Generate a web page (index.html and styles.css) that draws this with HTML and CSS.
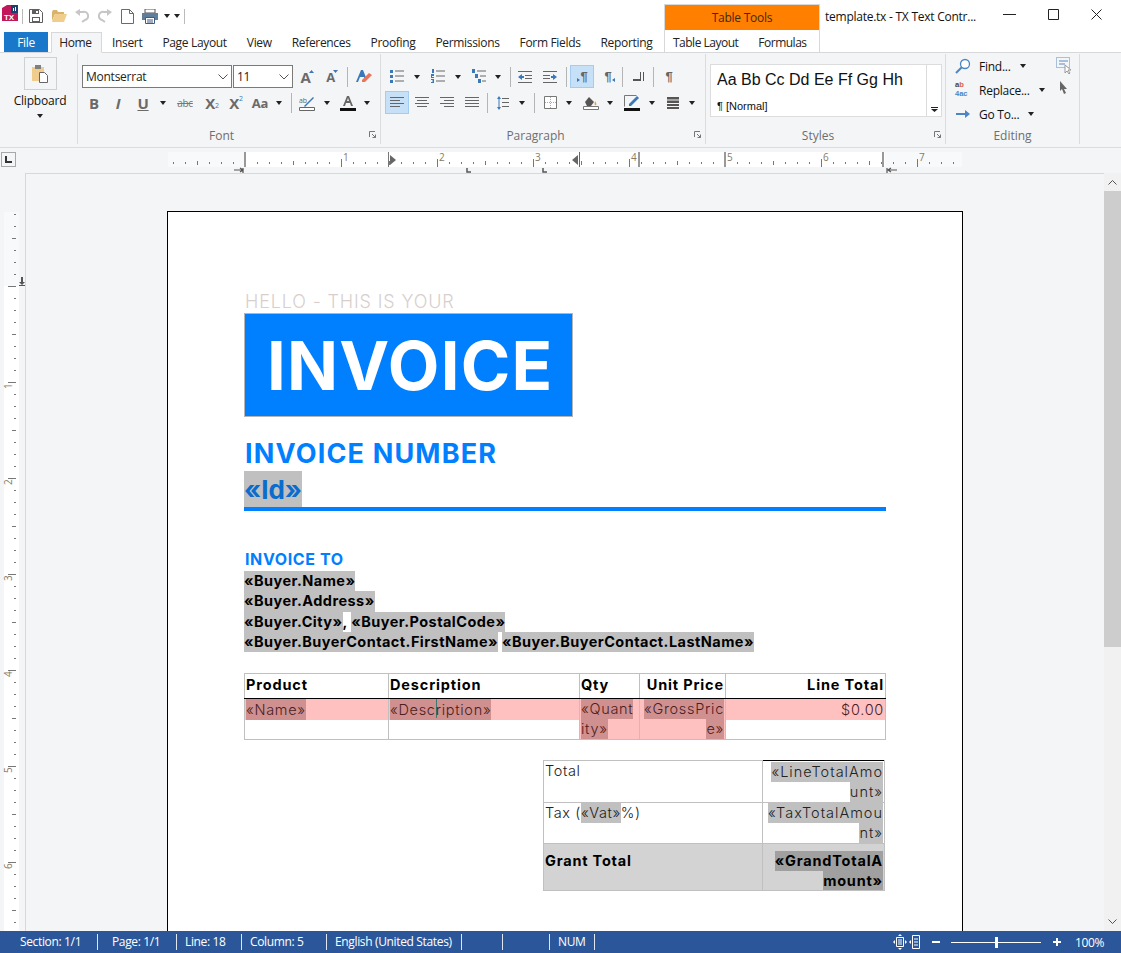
FILE: index.html
```html
<!DOCTYPE html>
<html lang="en">
<head>
    <meta charset="UTF-8">
    <title>template.tx - TX Text Control</title>
    <link rel="stylesheet" href="styles.css">
</head>
<body>
    <div class="header">
        <div class="header-left">
            <div class="qat">
                <svg class="logo" width="16" height="18" viewBox="0 0 16 18"><path d="M0 3l5-3h11v16H0z" fill="#c2185b"/><rect x="9" y="0" width="7" height="8" fill="#1f3f6e"/><path d="M11 6V3h1v3zM13 6V2h1v4z" fill="#fff"/><text x="2" y="15" class="logo-text">TX</text></svg>
                <span class="qat-sep"></span>
                <svg width="14" height="14" viewBox="0 0 14 14" class="qat-save"><path d="M.5.5h10l3 3v10H.5z" fill="none" stroke="#5f5f5f"/><path d="M3 1h7v4H3zM3 8h8v5H3z" fill="#5f5f5f"/><path d="M7 2h2v2H7zM4 9h6v3H4z" fill="#fff"/></svg>
                <svg width="15" height="12" viewBox="0 0 15 12" class="qat-open"><path d="M0 2l1-2h4l1 2h6v2H3L0 11z" fill="#d9b36c"/><path d="M3 4h12l-3 8H0z" fill="#f0cd8c"/></svg>
                <svg width="14" height="14" viewBox="0 0 14 14" class="qat-undo"><path d="M3 3h5a4 4 0 0 1 2 8l-3 2" fill="none" stroke="#c6c6c6" stroke-width="2"/><path d="M0 3l5-3v7z" fill="#c6c6c6"/></svg>
                <svg width="14" height="14" viewBox="0 0 14 14" class="qat-redo"><path d="M11 3H6a4 4 0 0 0-2 8l3 2" fill="none" stroke="#c6c6c6" stroke-width="2"/><path d="M14 3L9 0v7z" fill="#c6c6c6"/></svg>
                <svg width="13" height="15" viewBox="0 0 13 15" class="qat-new"><path d="M.5.5h8l4 4v10H.5zM8.500.5v4h4" fill="#fff" stroke="#6a6a6a"/></svg>
                <svg width="16" height="15" viewBox="0 0 16 15" class="qat-print"><path d="M3 0h10v4H3z" fill="#fff" stroke="#555"/><path d="M0 4h16v7H0z" fill="#5f7d9c"/><path d="M3.500 8.500h9v6h-9z" fill="#fff" stroke="#3c5c80"/><path d="M5 11h6M5 13h6" stroke="#3c5c80"/></svg>
                <span class="caret qat-caret"></span>
                <span class="caret qat-caret2"></span>
                <span class="qat-sep qat-sep-end"></span>
            </div>
            <div class="tabs">
                <span class="tab-file">File</span>
                <span class="tab tab-active">Home</span>
                <span class="tab">Insert</span>
                <span class="tab">Page Layout</span>
                <span class="tab">View</span>
                <span class="tab">References</span>
                <span class="tab">Proofing</span>
                <span class="tab">Permissions</span>
                <span class="tab">Form Fields</span>
                <span class="tab">Reporting</span>
            </div>
        </div>
        <div class="context">
            <div class="context-title">Table Tools</div>
            <div class="context-tabs">
                <span class="tab">Table Layout</span>
                <span class="tab">Formulas</span>
            </div>
        </div>
        <div class="title">template.tx - TX Text Contr...</div>
        <div class="window-btns">
            <svg width="13" height="11" viewBox="0 0 13 11"><path d="M0 5.500h13" stroke="#222"/></svg>
            <svg width="11" height="11" viewBox="0 0 11 11"><path d="M.5.5h10v10H.5z" fill="none" stroke="#222"/></svg>
            <svg width="11" height="11" viewBox="0 0 11 11"><path d="M.5.5l10 10M10.500.5l-10 10" stroke="#222"/></svg>
        </div>
    </div>

    <div class="ribbon">
        <div class="group group-clipboard">
            <span class="big-btn">
                <svg width="16" height="19" viewBox="0 0 16 19"><path d="M0 3h12v14H0z" fill="#f0cd8c"/><path d="M3 1h6v4H3z" fill="#7f7f7f"/><path d="M7.500 8.500h5l3 3v7h-8z" fill="#fff" stroke="#666"/></svg>
            </span>
            <span class="big-label">Clipboard</span>
            <span class="caret"></span>
        </div>

        <div class="group group-font">
            <div class="rows">
                <div class="row">
                    <div class="combo combo-font">Montserrat<svg width="10" height="6" viewBox="0 0 10 6"><path d="M.5.500l4.500 4.500L9.500.5" fill="none" stroke="#555"/></svg></div>
                    <div class="combo combo-size">11<svg width="10" height="6" viewBox="0 0 10 6"><path d="M.5.500l4.500 4.500L9.500.5" fill="none" stroke="#555"/></svg></div>
                    <span class="tool w28 t-grow"><b class="glyph">A</b><svg width="5" height="3" viewBox="0 0 5 3"><path d="M0 3l2.500-3L5 3z" fill="#3c78b8"/></svg></span>
                    <span class="tool w22 t-shrink"><b class="glyph glyph-small">A</b><svg width="5" height="3" viewBox="0 0 5 3"><path d="M0 0l2.500 3L5 0z" fill="#3c78b8"/></svg></span>
                    <span class="sep ml4 mr4"></span>
                    <span class="tool w24">
                        <svg width="16" height="15" viewBox="0 0 16 15"><path d="M0 13L5 1h2l4 10H9L8 8H4l-2 5z" fill="#3c78b8"/><path d="M6 11l7-7 3 2-7 7H6z" fill="#e8765a"/></svg>
                    </span>
                </div>
                <div class="row">
                    <span class="tool w24"><b class="glyph">B</b></span>
                    <span class="tool w24"><i class="glyph glyph-i">I</i></span>
                    <span class="tool w26"><b class="glyph glyph-u">U</b></span>
                    <span class="tool w14"><span class="caret"></span></span>
                    <span class="tool w30"><span class="glyph-abc">abc</span></span>
                    <span class="tool w24"><b class="glyph">X</b><sub class="sub">2</sub></span>
                    <span class="tool w24"><b class="glyph">X</b><sup class="sup">2</sup></span>
                    <span class="tool w24"><b class="glyph glyph-aa">Aa</b></span>
                    <span class="tool w14"><span class="caret"></span></span>
                    <span class="sep ml5 mr5"></span>
                    <span class="tool w20">
                        <svg width="16" height="16" viewBox="0 0 16 16"><path d="M.5 12.500h15v3H.5z" fill="#fff" stroke="#666"/><path d="M5 11l9-9 1 1-9 9z" fill="#3c78b8"/><text x="0" y="8" class="mini-text">ab</text></svg>
                    </span>
                    <span class="tool w19"><span class="caret"></span></span>
                    <span class="tool w24">
                        <svg width="16" height="16" viewBox="0 0 16 16"><path d="M3 11L7 1h2l4 10h-2L10 8H6l-1 3zM7 6h2L8 3z" fill="#666"/><path d="M0 13h16v3H0z" fill="#111"/></svg>
                    </span>
                    <span class="tool w14"><span class="caret"></span></span>
                </div>
            </div>
            <div class="group-label">Font</div>
            <svg class="launcher" width="7" height="7" viewBox="0 0 7 7"><path d="M.5 6V.5H6M3 3l3.500 3.500M6.500 3.500v3h-3" fill="none" stroke="#777"/></svg>
        </div>

        <div class="group group-paragraph">
            <div class="rows">
                <div class="row">
                    <span class="tool w24">
                        <svg width="14" height="15" viewBox="0 0 14 15"><path d="M5 2h9M5 7h9M5 12h9" stroke="#666"/><path d="M0 1h3v3H0zM0 6h3v3H0zM0 11h3v3H0z" fill="#3c78b8"/></svg>
                    </span>
                    <span class="tool w16"><span class="caret"></span></span>
                    <span class="tool w26">
                        <svg width="14" height="15" viewBox="0 0 14 15"><path d="M5 2h9M5 7h9M5 12h9" stroke="#666"/><path d="M1 0h2v4H1zM0 5h3v2H1v1h2v1H0zM0 10h3v4H0v-1h2v-.5H1v-1h1V11H0z" fill="#3c78b8"/></svg>
                    </span>
                    <span class="tool w14"><span class="caret"></span></span>
                    <span class="tool w28">
                        <svg width="14" height="15" viewBox="0 0 14 15"><path d="M5 2h9M8 7h6M10 12h4" stroke="#666"/><path d="M0 0h3v4H0zM3 5h3v4H3zM6 10h3v4H6z" fill="#3c78b8"/></svg>
                    </span>
                    <span class="tool w10"><span class="caret"></span></span>
                    <span class="sep ml7 mr1"></span>
                    <span class="tool w25">
                        <svg width="14" height="12" viewBox="0 0 14 12"><path d="M0 .5h14M7 4.500h7M7 7.500h7M0 11.500h14" stroke="#666"/><path d="M0 6l4-3v2h2v2H4v2z" fill="#3c78b8"/></svg>
                    </span>
                    <span class="tool w25">
                        <svg width="14" height="12" viewBox="0 0 14 12"><path d="M0 .5h14M0 4.500h7M0 7.500h7M0 11.500h14" stroke="#666"/><path d="M14 6l-4-3v2H8v2h2v2z" fill="#3c78b8"/></svg>
                    </span>
                    <span class="sep ml4 mr3"></span>
                    <span class="tool w24 tool-on"><span class="mini-tri-right"></span><span class="pilcrow">¶</span></span>
                    <span class="tool w24 ml4"><span class="pilcrow">¶</span><span class="mini-tri"></span></span>
                    <span class="sep"></span>
                    <span class="tool w30">
                        <svg width="11" height="9" viewBox="0 0 11 9"><path d="M0 7h7V0h1v9H0zM10 0h1v9h-1z" fill="#555"/></svg>
                    </span>
                    <span class="sep"></span>
                    <span class="tool w30"><span class="pilcrow">¶</span></span>
                </div>
                <div class="row">
                    <span class="tool w24 tool-on">
                        <svg width="14" height="12" viewBox="0 0 14 12"><path d="M0 .5h14M0 3.500h10M0 6.500h14M0 9.500h10" stroke="#666"/></svg>
                    </span>
                    <span class="tool w25">
                        <svg width="14" height="12" viewBox="0 0 14 12"><path d="M0 .5h14M2 3.500h10M0 6.500h14M2 9.500h10" stroke="#666"/></svg>
                    </span>
                    <span class="tool w25">
                        <svg width="14" height="12" viewBox="0 0 14 12"><path d="M0 .5h14M4 3.500h10M0 6.500h14M4 9.500h10" stroke="#666"/></svg>
                    </span>
                    <span class="tool w25">
                        <svg width="14" height="12" viewBox="0 0 14 12"><path d="M0 .5h14M0 3.500h14M0 6.500h14M0 9.500h14" stroke="#666"/></svg>
                    </span>
                    <span class="sep ml3"></span>
                    <span class="tool w30">
                        <svg width="12" height="14" viewBox="0 0 12 14"><path d="M5 2.500h7M5 6.500h7M5 10.500h7" stroke="#666"/><path d="M2 0l2 3H0zM2 14l2-3H0zM1.500 3h1v8h-1z" fill="#3c78b8"/></svg>
                    </span>
                    <span class="tool w8"><span class="caret"></span></span>
                    <span class="sep ml8"></span>
                    <span class="tool w30">
                        <svg width="13" height="13" viewBox="0 0 13 13"><path d="M.5.500h12v12H.5z" fill="#fff" stroke="#777"/><path d="M6.500 1v11M1 6.500h11" stroke="#aaa" stroke-dasharray="1 1"/></svg>
                    </span>
                    <span class="tool w8"><span class="caret"></span></span>
                    <span class="tool w26 ml5">
                        <svg width="16" height="15" viewBox="0 0 16 15"><path d="M2 7l4-5 5 5-3 4H4z" fill="#555"/><path d="M12 6c1 2 2 3 1 4s-2 0-1-4z" fill="#e0a030"/><path d="M.5 11.500h15v3H.5z" fill="#fff" stroke="#777"/></svg>
                    </span>
                    <span class="tool w12"><span class="caret"></span></span>
                    <span class="tool w32">
                        <svg width="17" height="16" viewBox="0 0 17 16"><path d="M.5.500h12M.5.5v11" stroke="#777" fill="none"/><path d="M5 9l8-8 2 2-8 8H5z" fill="#3c78b8"/><path d="M0 13h16v3H0z" fill="#111"/></svg>
                    </span>
                    <span class="tool w8"><span class="caret"></span></span>
                    <span class="tool w26 ml4">
                        <svg width="12" height="12" viewBox="0 0 12 12"><path d="M0 0h12v2.500H0zM0 3.500h12V6H0zM0 7h12v2H0zM0 10h12v2H0z" fill="#555"/></svg>
                    </span>
                    <span class="tool w12"><span class="caret"></span></span>
                </div>
            </div>
            <div class="group-label">Paragraph</div>
            <svg class="launcher" width="7" height="7" viewBox="0 0 7 7"><path d="M.5 6V.5H6M3 3l3.500 3.500M6.500 3.500v3h-3" fill="none" stroke="#777"/></svg>
        </div>

        <div class="group group-styles">
            <div class="styles-box">
                <div class="styles-list">
                    <div class="style-sample">Aa Bb Cc Dd Ee Ff Gg Hh</div>
                    <div class="style-name">¶ [Normal]</div>
                </div>
                <div class="styles-more">
                    <svg width="7" height="5" viewBox="0 0 7 5"><path d="M0 0h7v1H0zM0 2h7L3.500 5z" fill="#222"/></svg>
                </div>
            </div>
            <div class="group-label">Styles</div>
            <svg class="launcher" width="7" height="7" viewBox="0 0 7 7"><path d="M.5 6V.5H6M3 3l3.500 3.500M6.500 3.500v3h-3" fill="none" stroke="#777"/></svg>
        </div>

        <div class="group group-editing">
            <div class="edit-grid">
                <div class="edit-item">
                    <svg width="16" height="16" viewBox="0 0 16 16"><circle cx="10" cy="6" r="4.500" fill="#fff" stroke="#4a86c5" stroke-width="1.300"/><path d="M7 9l-6 6" stroke="#4a86c5" stroke-width="2"/></svg>
                    <span>Find...</span><span class="caret"></span>
                </div>
                <svg class="edit-side" width="15" height="17" viewBox="0 0 15 17"><path d="M.5.500h13v10H.5z" fill="none" stroke="#5a8ac0" stroke-dasharray="1 1"/><path d="M3 4h9M3 7h6" stroke="#5a8ac0"/><path d="M9 8v8l2-2 2 3 1-1-2-3h3z" fill="#fff" stroke="#999"/></svg>
                <div class="edit-item">
                    <span class="abac"><b class="abac-top">a<em>b</em></b><b class="abac-bottom">4ac</b></span>
                    <span>Replace...</span><span class="caret"></span>
                </div>
                <svg class="edit-side" width="9" height="13" viewBox="0 0 9 13"><path d="M1 0v10l2-2 2 5 2-1-2-4h3z" fill="#666"/></svg>
                <div class="edit-item">
                    <svg width="16" height="16" viewBox="0 0 16 16"><path d="M1 7h10v2H1z" fill="#4a86c5"/><path d="M10 4l5 4-5 4z" fill="#4a86c5"/></svg>
                    <span>Go To...</span><span class="caret"></span>
                </div>
            </div>
            <div class="group-label">Editing</div>
        </div>
    </div>

    <div class="ruler-row">
        <span class="ruler-btn"><svg width="7" height="7" viewBox="0 0 7 7"><path d="M0 0h2v5h5v2H0z" fill="#333"/></svg></span>
        <svg class="ruler" width="800" height="22" viewBox="0 0 800 22">
            <defs>
                <pattern id="hticks" x="77" y="0" width="96" height="22" patternUnits="userSpaceOnUse">
                    <rect x="0" y="7" width="1" height="8" fill="#777"/>
                    <rect x="12" y="10" width="1" height="2" fill="#777"/>
                    <rect x="24" y="10" width="1" height="2" fill="#777"/>
                    <rect x="36" y="10" width="1" height="2" fill="#777"/>
                    <rect x="48" y="9" width="1" height="4" fill="#777"/>
                    <rect x="60" y="10" width="1" height="2" fill="#777"/>
                    <rect x="72" y="10" width="1" height="2" fill="#777"/>
                    <rect x="84" y="10" width="1" height="2" fill="#777"/>
                </pattern>
            </defs>
            <rect x="0" y="0" width="794" height="15" fill="#f8f9fa"/>
            <rect x="77" y="0" width="640" height="15" fill="#fff"/>
            <rect x="0" y="0" width="794" height="15" fill="url(#hticks)"/>
            <text class="ruler-num" x="175" y="9">1</text>
            <text class="ruler-num" x="271" y="9">2</text>
            <text class="ruler-num" x="367" y="9">3</text>
            <text class="ruler-num" x="463" y="9">4</text>
            <text class="ruler-num" x="559" y="9">5</text>
            <text class="ruler-num" x="655" y="9">6</text>
            <text class="ruler-num" x="751" y="9">7</text>
            <path d="M76 0h2v15h-2zM470 0h2v15h-2zM556 0h2v15h-2zM714 0h2v15h-2z" fill="#999"/>
            <path d="M220 0h1v15h-1z" fill="#777"/>
            <path d="M222 3l6 5-6 5z" fill="#666"/>
            <path d="M411 0h1v15h-1zM410 3l-6 5 6 5z" fill="#666"/>
            <path d="M66 18h9M75 16v5M72 16l3 2-3 2" fill="none" stroke="#555" stroke-width="1.200"/>
            <path d="M299 16v4h4M375 16v4h4" fill="none" stroke="#555" stroke-width="1.500"/>
            <path d="M719 16v5M720 18h9M723 16l-3 2 3 2" fill="none" stroke="#555" stroke-width="1.200"/>
        </svg>
    </div>

    <div class="main">
        <div class="vruler">
            <svg width="25" height="730" viewBox="0 0 25 730">
                <defs>
                    <pattern id="vticks" x="0" y="74" width="25" height="96" patternUnits="userSpaceOnUse">
                        <rect x="8" y="0" width="8" height="1" fill="#777"/>
                        <rect x="14" y="12" width="2" height="1" fill="#777"/>
                        <rect x="14" y="24" width="2" height="1" fill="#777"/>
                        <rect x="14" y="36" width="2" height="1" fill="#777"/>
                        <rect x="12" y="48" width="4" height="1" fill="#777"/>
                        <rect x="14" y="60" width="2" height="1" fill="#777"/>
                        <rect x="14" y="72" width="2" height="1" fill="#777"/>
                        <rect x="14" y="84" width="2" height="1" fill="#777"/>
                    </pattern>
                </defs>
                <rect x="4" y="0" width="15" height="74" fill="#f8f9fa"/>
                <rect x="4" y="74" width="15" height="656" fill="#fff"/>
                <rect x="4" y="0" width="15" height="730" fill="url(#vticks)"/>
                <text class="ruler-num" transform="translate(12 177) rotate(-90)">1</text>
                <text class="ruler-num" transform="translate(12 273) rotate(-90)">2</text>
                <text class="ruler-num" transform="translate(12 369) rotate(-90)">3</text>
                <text class="ruler-num" transform="translate(12 465) rotate(-90)">4</text>
                <text class="ruler-num" transform="translate(12 561) rotate(-90)">5</text>
                <text class="ruler-num" transform="translate(12 657) rotate(-90)">6</text>
                <path d="M21 65h2v7h-2zM19 70h6l-3 3zM19 73h6v1h-6z" fill="#555"/>
            </svg>
        </div>
        <div class="canvas">
            <div class="page">
                <div class="hello">HELLO - THIS IS YOUR</div>
                <div class="invoice-box">INVOICE</div>
                <div class="number-title">INVOICE NUMBER</div>
                <div class="number-line"><span class="field">«Id»</span></div>
                <div class="to-title">INVOICE TO</div>
                <div class="buyer"><span class="field">«Buyer.Name»</span></div>
                <div class="buyer"><span class="field">«Buyer.Address»</span></div>
                <div class="buyer"><span class="field">«Buyer.City»</span>, <span class="field">«Buyer.PostalCode»</span></div>
                <div class="buyer"><span class="field">«Buyer.BuyerContact.FirstName»</span> <span class="field">«Buyer.BuyerContact.LastName»</span></div>

                <table class="items">
                    <tr class="items-head">
                        <th class="c-product">Product</th>
                        <th class="c-desc">Description</th>
                        <th class="c-qty">Qty</th>
                        <th class="c-price">Unit Price</th>
                        <th class="c-line">Line Total</th>
                    </tr>
                    <tr class="items-row">
                        <td><div class="pink"><span class="pink-field">«Name»</span></div></td>
                        <td><div class="pink"><span class="pink-field">«Desc<span class="cursor"></span>ription»</span></div></td>
                        <td class="all-pink"><span class="pink-field">«Quant</span><br><span class="pink-field">ity»</span></td>
                        <td class="all-pink num"><span class="pink-field">«GrossPric</span><br><span class="pink-field">e»</span></td>
                        <td class="num"><div class="pink">$0.00</div></td>
                    </tr>
                </table>

                <table class="totals">
                    <tr class="t-first">
                        <td class="t-label">Total</td>
                        <td class="t-value t-top"><span class="field">«LineTotalAmo</span><br><span class="field">unt»</span></td>
                    </tr>
                    <tr class="t-second">
                        <td class="t-label">Tax (<span class="field">«Vat»</span>%)</td>
                        <td class="t-value"><span class="field">«TaxTotalAmou</span><br><span class="field">nt»</span></td>
                    </tr>
                    <tr class="t-grand">
                        <td class="t-label">Grant Total</td>
                        <td class="t-value"><span class="field-dark">«GrandTotalA</span><br><span class="field-dark">mount»</span></td>
                    </tr>
                </table>
            </div>
        </div>
        <div class="scrollbar">
            <svg width="9" height="5" viewBox="0 0 9 5"><path d="M.5 4.500l4-4 4 4" fill="none" stroke="#555"/></svg>
            <div class="thumb"></div>
            <svg class="scroll-down" width="9" height="5" viewBox="0 0 9 5"><path d="M.5.500l4 4 4-4" fill="none" stroke="#555"/></svg>
        </div>
    </div>

    <div class="status">
        <span class="st st-section">Section: 1/1</span>
        <span class="st st-page">Page: 1/1</span>
        <span class="st st-line">Line: 18</span>
        <span class="st st-col">Column: 5</span>
        <span class="st st-lang">English (United States)</span>
        <span class="st st-empty"></span>
        <span class="st st-empty2"></span>
        <span class="st st-num">NUM</span>
        <div class="zoom">
            <svg width="14" height="16" viewBox="0 0 14 16"><path d="M7 0l2 2H5zM7 16l2-2H5zM0 8l2-2v4zM14 8l-2-2v4z" fill="#fff"/><path d="M3.500 3.500h7v9h-7zM5 6h4M5 8h4M5 10h4" fill="none" stroke="#fff"/></svg>
            <svg width="11" height="14" viewBox="0 0 11 14"><path d="M3.500.5h7v13h-7zM5 4h4M5 7h4M5 10h4" fill="none" stroke="#fff"/><path d="M0 7l2-2v4z" fill="#fff"/></svg>
            <span class="zoom-minus"></span>
            <span class="zoom-track"><span class="zoom-thumb"></span></span>
            <span class="zoom-plus"></span>
            <span class="zoom-val">100%</span>
        </div>
    </div>
</body>
</html>
```
FILE: styles.css
```css
* {
    margin: 0;
    padding: 0;
    box-sizing: border-box;
}
body {
    width: 1121px;
    height: 953px;
    overflow: hidden;
    display: flex;
    flex-direction: column;
    background: #fff;
    color: #111;
    font-family: "Open Sans", sans-serif;
    font-size: 12px;
    letter-spacing: -0.25px;
}

/* title + tabs */
.header {
    display: flex;
    height: 53px;
    border-bottom: 1px solid #d6d8da;
    flex: none;
}
.header-left {
    width: 664px;
    flex: none;
    display: flex;
    flex-direction: column;
}
.qat {
    height: 32px;
    display: flex;
    align-items: center;
    padding-left: 2px;
}
.logo {
    margin-top: -4px;
}
.logo-text {
    font: bold 8px "Liberation Sans", sans-serif;
    fill: #fff;
}
.qat-sep {
    width: 1px;
    height: 15px;
    background: #bbb;
    margin: 0 6px 0 4px;
}
.qat-open { margin-left: 9px; }
.qat-undo { margin-left: 8px; }
.qat-redo { margin-left: 9px; }
.qat-new { margin-left: 9px; }
.qat-print { margin-left: 8px; }
.qat-caret { margin-left: 6px; }
.qat-caret2 { margin-left: 4px; }
.qat-sep-end { margin: 0 0 0 4px; }
.caret {
    display: inline-block;
    width: 0;
    height: 0;
    border-left: 3.5px solid transparent;
    border-right: 3.5px solid transparent;
    border-top: 4px solid #222;
}
.tabs {
    display: flex;
    height: 20px;
    padding-left: 4px;
    align-items: stretch;
    letter-spacing: -0.33px;
}
.tab-file {
    width: 44px;
    flex: none;
    margin-right: 3px;
    background: #1a78ca;
    color: #fff;
    display: flex;
    align-items: center;
    justify-content: center;
}
.tab {
    flex: none;
    padding: 0 10px;
    display: flex;
    align-items: center;
    white-space: nowrap;
    color: #222;
}
.tab-active {
    width: 51px;
    padding: 0 2px 0 0;
    justify-content: center;
    background: #f4f5f7;
    border: 1px solid #d6d8da;
    border-bottom: 1px solid #f4f5f7;
    height: 21px;
}
.context {
    width: 156px;
    flex: none;
    margin-top: 4px;
    border: 1px solid #d6d8da;
    border-bottom: 0;
    display: flex;
    flex-direction: column;
}
.context-title {
    height: 25px;
    background: #ff7f00;
    text-align: center;
    line-height: 25px;
    color: #3f2a0c;
    flex: none;
}
.context-tabs {
    display: flex;
    flex: 1;
    padding-top: 3px;
    letter-spacing: -0.5px;
}
.context-tabs .tab {
    padding: 0 10px 0 8px;
}
.context-tabs .tab + .tab {
    padding-left: 10px;
}
.title {
    width: 178px;
    flex: none;
    padding: 8px 0 0 5px;
    white-space: nowrap;
}
.window-btns {
    display: flex;
    align-items: flex-start;
    gap: 32px;
    padding: 9px 0 0 5px;
    flex: 1;
}

/* ribbon */
.ribbon {
    display: flex;
    height: 95px;
    background: #f4f5f7;
    border-bottom: 1px solid #dbdcde;
    padding-top: 1px;
    flex: none;
}
.group {
    position: relative;
    border-right: 1px solid #dbdcde;
    height: 90px;
    padding-top: 11px;
    flex: none;
}
.group-clipboard {
    width: 78px;
    display: flex;
    flex-direction: column;
    align-items: center;
    padding: 3px 0 0 3px;
}
.big-btn {
    width: 33px;
    height: 33px;
    border: 1px solid #d0d0d0;
    display: flex;
    align-items: center;
    justify-content: center;
}
.big-label {
    margin-top: 2px;
    line-height: 17px;
    letter-spacing: -0.2px;
}
.group-clipboard .caret {
    margin-top: 5px;
}
.group-font {
    width: 303px;
    padding-left: 4px;
}
.group-paragraph {
    width: 325px;
    padding-left: 4px;
}
.group-styles {
    width: 240px;
    padding-top: 10px;
}
.group-editing {
    width: 134px;
    padding-top: 0;
}
.rows {
    display: flex;
    flex-direction: column;
    gap: 3px;
}
.row {
    display: flex;
    height: 23px;
    align-items: center;
}
.group-label {
    position: absolute;
    left: 0;
    right: 15px;
    bottom: 0;
    text-align: center;
    color: #6e6e6e;
    letter-spacing: 0;
}
.group-editing .group-label {
    right: 0;
}
.launcher {
    position: absolute;
    right: 4px;
    bottom: 6px;
}
.combo {
    height: 23px;
    flex: none;
    border: 1px solid #7a7a7a;
    background: #fff;
    display: flex;
    align-items: center;
    justify-content: space-between;
    padding: 0 3px;
    color: #222;
}
.combo-font {
    width: 150px;
}
.combo-size {
    width: 60px;
    margin-left: 1px;
}
.tool {
    position: relative;
    height: 23px;
    display: flex;
    align-items: center;
    justify-content: center;
    flex: none;
}
.w8 { width: 8px; }
.w10 { width: 10px; }
.w12 { width: 12px; }
.w14 { width: 14px; }
.w16 { width: 16px; }
.w19 { width: 19px; }
.w20 { width: 20px; }
.w22 { width: 22px; }
.w24 { width: 24px; }
.w25 { width: 25px; }
.w26 { width: 26px; }
.w28 { width: 28px; }
.w30 { width: 30px; }
.w32 { width: 32px; }
.ml3 { margin-left: 3px; }
.ml4 { margin-left: 4px; }
.ml5 { margin-left: 5px; }
.ml7 { margin-left: 7px; }
.ml8 { margin-left: 8px; }
.mr1 { margin-right: 1px; }
.mr3 { margin-right: 3px; }
.mr4 { margin-right: 4px; }
.mr5 { margin-right: 5px; }
.tool-on {
    background: #c5e0f7;
    border: 1px solid #a3cdf0;
}
.glyph {
    font: bold 15px "Open Sans", sans-serif;
    color: #6a6a6a;
}
.glyph-small {
    font-size: 13px;
}
.glyph-i {
    font-weight: bold;
    font-style: italic;
}
.glyph-u {
    text-decoration: underline;
}
.glyph-aa {
    font-size: 13px;
}
.glyph-abc {
    font-size: 10px;
    color: #777;
    text-decoration: line-through;
}
.sub, .sup {
    font-size: 7px;
    color: #3c78b8;
    line-height: 1;
    align-self: flex-end;
    margin-bottom: 5px;
}
.sup {
    align-self: flex-start;
    margin: 4px 0 0;
}
.t-grow svg, .t-shrink svg {
    margin: 0 0 10px -2px;
}
.mini-text {
    font: 7px "Open Sans", sans-serif;
    fill: #666;
}
.pilcrow {
    font: bold 13px "Liberation Sans", sans-serif;
    color: #666;
}
.mini-tri, .mini-tri-right {
    width: 0;
    height: 0;
    border-top: 2.500px solid transparent;
    border-bottom: 2.500px solid transparent;
    border-right: 3px solid #3c78b8;
    margin: 7px 0 0 1px;
}
.mini-tri-right {
    border-right: 0;
    border-left: 3px solid #3c78b8;
    margin: 7px 1px 0 0;
}
.sep {
    width: 1px;
    height: 20px;
    background: #b5b5b5;
    flex: none;
}

/* styles gallery */
.styles-box {
    margin: 0 0 0 4px;
    width: 232px;
    height: 53px;
    border: 1px solid #dcdcdc;
    background: #fff;
    display: flex;
}
.styles-list {
    flex: 1;
    padding: 4px 0 0 6px;
}
.style-sample {
    font: 16px "Liberation Sans", sans-serif;
    line-height: 22px;
    letter-spacing: 0;
    color: #111;
}
.style-name {
    font: 11px "Liberation Sans", sans-serif;
    line-height: 12px;
    margin-top: 9px;
    letter-spacing: 0;
}
.styles-more {
    width: 15px;
    border-left: 1px solid #dcdcdc;
    display: flex;
    align-items: flex-end;
    justify-content: center;
    padding-bottom: 4px;
}

/* editing */
.edit-grid {
    display: grid;
    grid-template-columns: 96px 24px;
    padding: 0 0 0 9px;
}
.edit-item {
    height: 24px;
    display: flex;
    align-items: center;
    white-space: nowrap;
}
.edit-item > svg, .abac {
    width: 16px;
    margin-right: 8px;
    flex: none;
}
.edit-item .caret {
    margin-left: 9px;
}
.edit-side {
    margin: 3px 0 0 0;
    justify-self: center;
}
.abac {
    display: flex;
    flex-direction: column;
    font: bold 7.500px/8.700px "Liberation Sans", sans-serif;
    letter-spacing: 0;
}
.abac b {
    color: #444;
}
.abac em {
    font-style: normal;
    color: #d9603b;
}
.abac .abac-bottom {
    color: #4a86c5;
}

/* rulers */
.ruler-row {
    height: 25px;
    flex: none;
    background: #f4f5f7;
    display: flex;
    padding: 4px 0 0 1px;
}
.ruler-btn {
    width: 15px;
    height: 15px;
    border: 1px solid #a8a8a8;
    display: flex;
    align-items: center;
    justify-content: center;
}
.ruler {
    margin-left: 152px;
    flex: none;
    overflow: visible;
}
.ruler-num {
    font: 10px "Open Sans", sans-serif;
    fill: #8a7a60;
}
.main {
    flex: 1;
    min-height: 0;
    display: flex;
    overflow: hidden;
    background: #f4f5f7;
}
.vruler {
    width: 25px;
    flex: none;
    padding-top: 39px;
}
.canvas {
    width: 1079px;
    flex: none;
    border-left: 1px solid #d6d8da;
    border-top: 1px solid #d6d8da;
    padding: 37px 0 0 141px;
    overflow: hidden;
}
.scrollbar {
    flex: 1;
    background: #f1f1f1;
    display: flex;
    flex-direction: column;
    align-items: center;
    padding-top: 7px;
}
.thumb {
    width: 100%;
    height: 456px;
    margin-top: 6px;
    background: #cdcdcd;
    flex: none;
}
.scroll-down {
    margin-top: auto;
    margin-bottom: 7px;
}

/* the document */
.page {
    width: 796px;
    height: 900px;
    background: #fff;
    border: 1px solid #000;
    padding: 79px 76px 0;
    font-family: "Inter", sans-serif;
    color: #111;
    letter-spacing: 0;
}
.hello {
    height: 22px;
    line-height: 22px;
    font-size: 18px;
    font-weight: 300;
    color: #d8cfcd;
    letter-spacing: 0.85px;
    padding-left: 1px;
}
.invoice-box {
    width: 329px;
    height: 104px;
    background: #0080ff;
    border: 1px solid #b5b5b5;
    color: #fff;
    font-size: 67px;
    font-weight: 700;
    line-height: 104px;
    padding-left: 22px;
    letter-spacing: 1.2px;
}
.number-title {
    margin-top: 18px;
    height: 36px;
    line-height: 38px;
    font-size: 27px;
    font-weight: 700;
    color: #0080ff;
    padding-left: 1px;
    letter-spacing: 1.16px;
}
.number-line {
    height: 40px;
    border-bottom: 4px solid #0080ff;
    line-height: 34px;
    font-size: 26px;
    font-weight: 700;
    color: #0a6ccc;
}
.number-line .field {
    padding-top: 2px;
}
.field {
    background: #c0c0c0;
    display: inline-block;
}
.to-title {
    margin-top: 39px;
    height: 21px;
    line-height: 19px;
    font-size: 16px;
    font-weight: 700;
    color: #0080ff;
    padding-left: 1px;
    letter-spacing: 0.6px;
}
.buyer {
    line-height: 20.330px;
    font-size: 14.500px;
    font-weight: 700;
    color: #000;
    letter-spacing: 0.45px;
}
.items, .totals {
    border-collapse: collapse;
    table-layout: fixed;
    font-size: 14.500px;
}
.items {
    width: 641px;
    margin-top: 21px;
}
.items th, .items td, .totals td {
    border: 1px solid #c0c0c0;
    vertical-align: top;
}
.items th {
    height: 25px;
    line-height: 21px;
    padding: 0 1px;
    text-align: left;
    font-weight: 700;
    color: #000;
    border-bottom: 1px solid #000;
    letter-spacing: 0.85px;
}
.c-product { width: 144px; }
.c-desc { width: 191px; }
.c-qty { width: 60px; }
.items .c-price { width: 86px; text-align: right; }
.items .c-line { width: 160px; text-align: right; }
.items td {
    line-height: 20px;
    height: 41px;
    color: #4a2020;
    font-weight: 300;
    letter-spacing: 0.7px;
}
.pink {
    background: #ffc0c0;
    height: 21px;
    line-height: 21px;
    padding: 0 1px;
}
.pink-field {
    background: #d09090;
    display: inline-block;
}
.cursor {
    display: inline-block;
    width: 1px;
    height: 19px;
    margin-right: -1px;
    background: #3c7a70;
    vertical-align: top;
}
.items .all-pink {
    background: #ffc0c0;
    padding: 0 1px;
}
.items .num {
    text-align: right;
}
.totals {
    width: 341px;
    margin: 20px 0 0 299px;
    font-weight: 300;
    color: #222;
}
.totals td {
    line-height: 20px;
    padding: 0 1px;
}
.t-first td {
    height: 42px;
}
.t-second td {
    height: 41px;
}
.t-label {
    width: 219px;
    letter-spacing: 0.6px;
}
.t-value {
    width: 122px;
    text-align: right;
    letter-spacing: 1px;
}
.totals .t-first .t-value {
    padding-top: 1px;
}
.totals .t-top {
    border-top: 1px solid #000;
}
.totals .t-grand td {
    height: 46px;
    line-height: 19.500px;
    background: #d3d3d3;
    font-weight: 700;
    color: #000;
    border-top: 1px solid #000;
    padding-top: 7px;
    letter-spacing: 0.8px;
}
.field-dark {
    background: #a0a0a0;
    display: inline-block;
}

/* status bar */
.status {
    height: 22px;
    flex: none;
    background: #2b579a;
    color: #fff;
    display: flex;
    align-items: center;
    letter-spacing: -0.35px;
}
.st {
    height: 16px;
    line-height: 16px;
    border-right: 1px solid #dfe6f0;
    flex: none;
}
.st-section { width: 98px; padding-left: 20px; }
.st-page { width: 79px; padding-left: 14px; }
.st-line { width: 65px; padding-left: 8px; }
.st-col { width: 85px; padding-left: 8px; }
.st-lang { width: 135px; padding-left: 8px; }
.st-empty { width: 41px; }
.st-empty2 { width: 47px; }
.st-num { width: 45px; padding-left: 8px; }
.zoom {
    display: flex;
    align-items: center;
    margin-left: 298px;
    flex: none;
}
.zoom svg + svg {
    margin-left: 2px;
}
.zoom-minus {
    width: 8px;
    height: 2px;
    background: #fff;
    margin-left: 12px;
}
.zoom-track {
    width: 90px;
    height: 1px;
    background: #fff;
    margin-left: 11px;
    display: flex;
    align-items: center;
    justify-content: center;
}
.zoom-thumb {
    width: 3px;
    height: 11px;
    background: #fff;
    flex: none;
}
.zoom-plus {
    width: 8px;
    height: 8px;
    margin-left: 12px;
    background: linear-gradient(#fff, #fff) center / 8px 2px no-repeat, linear-gradient(#fff, #fff) center / 2px 8px no-repeat;
}
.zoom-val {
    margin-left: 14px;
}
```
